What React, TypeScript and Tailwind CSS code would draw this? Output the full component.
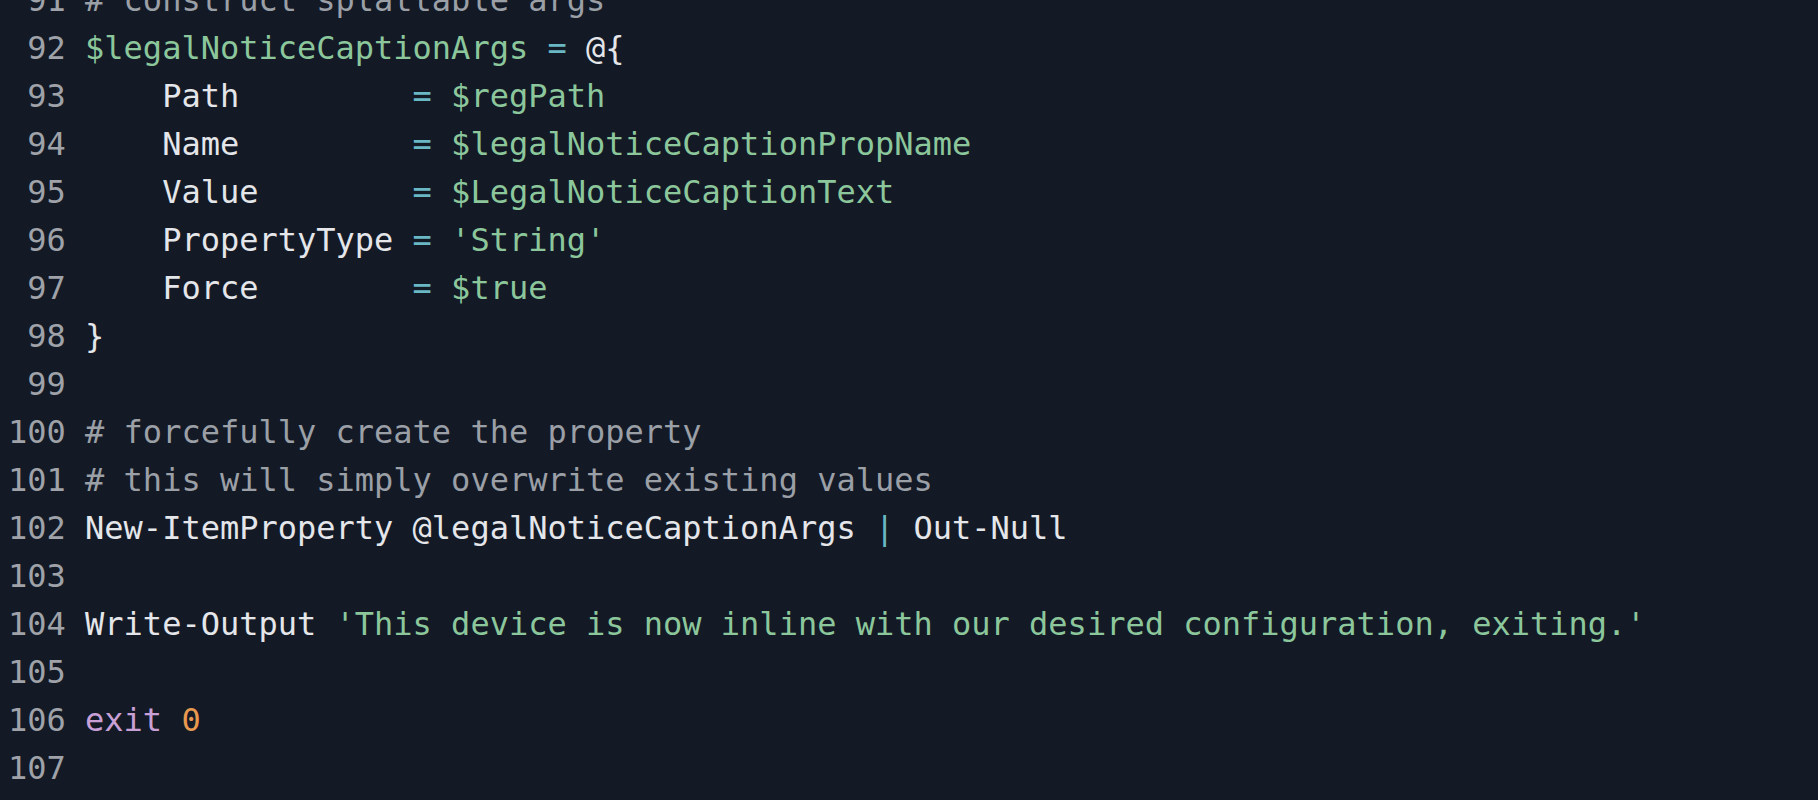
import React from "react";

type Tok = { t: string; c?: string };

const W = "text-[#e4e6ea]";
const G = "text-[#8cc79c]";
const EQ = "text-[#6ab8c4]";
const CM = "text-[#9b9fa6]";
const KW = "text-[#c9a0d6]";
const NUM = "text-[#e8994f]";

const lines: { n: number; toks: Tok[] }[] = [
  { n: 91, toks: [{ t: "# construct splattable args", c: CM }] },
  {
    n: 92,
    toks: [
      { t: "$legalNoticeCaptionArgs", c: G },
      { t: " " },
      { t: "=", c: EQ },
      { t: " @{", c: W },
    ],
  },
  {
    n: 93,
    toks: [
      { t: "    Path         ", c: W },
      { t: "=", c: EQ },
      { t: " $regPath", c: G },
    ],
  },
  {
    n: 94,
    toks: [
      { t: "    Name         ", c: W },
      { t: "=", c: EQ },
      { t: " $legalNoticeCaptionPropName", c: G },
    ],
  },
  {
    n: 95,
    toks: [
      { t: "    Value        ", c: W },
      { t: "=", c: EQ },
      { t: " $LegalNoticeCaptionText", c: G },
    ],
  },
  {
    n: 96,
    toks: [
      { t: "    PropertyType ", c: W },
      { t: "=", c: EQ },
      { t: " 'String'", c: G },
    ],
  },
  {
    n: 97,
    toks: [
      { t: "    Force        ", c: W },
      { t: "=", c: EQ },
      { t: " $true", c: G },
    ],
  },
  { n: 98, toks: [{ t: "}", c: W }] },
  { n: 99, toks: [] },
  { n: 100, toks: [{ t: "# forcefully create the property", c: CM }] },
  { n: 101, toks: [{ t: "# this will simply overwrite existing values", c: CM }] },
  {
    n: 102,
    toks: [
      { t: "New-ItemProperty @legalNoticeCaptionArgs ", c: W },
      { t: "|", c: EQ },
      { t: " Out-Null", c: W },
    ],
  },
  { n: 103, toks: [] },
  {
    n: 104,
    toks: [
      { t: "Write-Output ", c: W },
      {
        t: "'This device is now inline with our desired configuration, exiting.'",
        c: G,
      },
    ],
  },
  { n: 105, toks: [] },
  {
    n: 106,
    toks: [
      { t: "exit", c: KW },
      { t: " " },
      { t: "0", c: NUM },
    ],
  },
  { n: 107, toks: [] },
];

export default function App() {
  return (
    <div className="w-[1818px] h-[800px] overflow-hidden bg-[#131a26]">
      <div
        className="mt-[-24px] pl-[8px] text-[32px] leading-[48px] whitespace-pre"
        style={{ fontFamily: '"DejaVu Sans Mono", "Liberation Mono", monospace' }}
      >
        {lines.map((line) => (
          <div key={line.n} className="flex h-[48px]">
            <span className="w-[3ch] text-right text-[#9fa2a8]">{line.n}</span>
            <span className="ml-[1ch]">
              {line.toks.map((tok, i) => (
                <span key={i} className={tok.c ?? W}>
                  {tok.t}
                </span>
              ))}
            </span>
          </div>
        ))}
      </div>
    </div>
  );
}
